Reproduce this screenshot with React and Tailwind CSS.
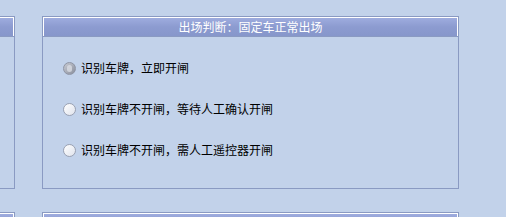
import React, { useState } from "react";

const options = [
  "识别车牌，立即开闸",
  "识别车牌不开闸，等待人工确认开闸",
  "识别车牌不开闸，需人工遥控器开闸",
];

const Header = ({ title }) => (
  <div className="h-[20px] border-b border-[#8a9ac2] bg-[#c2d2ea]">
    <div className="h-full border-t border-l border-r border-white bg-gradient-to-b from-[#9eacde] via-[#8c9bd0] to-[#8797cb] flex items-center justify-center text-white text-[12px] leading-none">
      {title}
    </div>
  </div>
);

const Radio = ({ checked }) =>
  checked ? (
    <span className="w-[13px] h-[13px] rounded-full bg-gradient-to-br from-[#c9ccd4] to-[#8a8f9c] border border-[#8e94a4] flex items-center justify-center">
      <span className="w-[5px] h-[7px] rounded-full bg-[#dfe2ea] opacity-70" />
    </span>
  ) : (
    <span className="w-[13px] h-[13px] rounded-full bg-gradient-to-br from-white to-[#dfe3ec] border border-[#9aa1b2]" />
  );

export default function App() {
  const [selected, setSelected] = useState(0);

  return (
    <div
      className="w-[506px] h-[217px] overflow-hidden bg-[#c2d2ea] pt-[16px]"
      style={{ fontFamily: '"Noto Sans CJK SC", "Noto Sans", sans-serif' }}
    >
      <div className="flex gap-[27px] -ml-[186px]">
        <div className="w-[201px] h-[173px] border border-[#8a9ac2]">
          <Header title="" />
        </div>
        <div className="w-[417px] h-[173px] border border-[#8a9ac2]">
          <Header title="出场判断：固定车正常出场" />
          <div className="flex flex-col gap-[27px] pl-[20px] pt-[24px] text-[12px] text-black">
            {options.map((o, i) => (
              <label
                key={o}
                className="flex items-center gap-[5px] h-[14px] leading-none cursor-pointer"
                onClick={() => setSelected(i)}
              >
                <Radio checked={selected === i} />
                <span>{o}</span>
              </label>
            ))}
          </div>
        </div>
      </div>
      <div className="flex gap-[27px] -ml-[186px] mt-[23px]">
        <div className="w-[201px] h-[60px] border border-[#8a9ac2]">
          <Header title="" />
        </div>
        <div className="w-[417px] h-[60px] border border-[#8a9ac2]">
          <Header title="" />
        </div>
      </div>
    </div>
  );
}
